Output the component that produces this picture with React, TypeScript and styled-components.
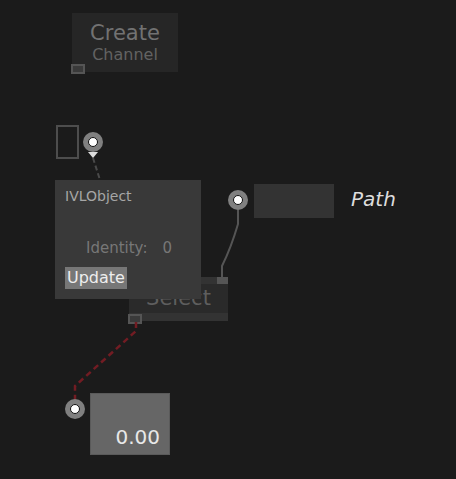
import React, { FC } from "react";
import styled, { createGlobalStyle } from "styled-components";

const GlobalStyle = createGlobalStyle`
  html, body {
    margin: 0;
    padding: 0;
    background: #1b1b1b;
  }
  body {
    font-family: "DejaVu Sans", "Liberation Sans", sans-serif;
  }
`;

const App: FC = () => {
  return (
    <StyledCanvas>
      <GlobalStyle />

      <StyledWires width={456} height={479}>
        <path d="M93 158 L100 180" stroke="#4a4a4a" strokeWidth={2} strokeDasharray="5 3" fill="none" />
        <path d="M238 210 L238 224 Q231 248 222 266 L222 278" stroke="#555" strokeWidth={2} fill="none" />
        <path d="M136 322 L136 331 L75 386 L75 400" stroke="#721c23" strokeWidth={2.5} strokeDasharray="6 4" fill="none" />
      </StyledWires>

      <StyledCreateNode>
        <StyledCreateTitle>Create</StyledCreateTitle>
        <StyledCreateSub>Channel</StyledCreateSub>
        <StyledSquarePort style={{ left: -1, bottom: -2 }} />
      </StyledCreateNode>

      <StyledEmptyFrame />

      <StyledRoundPort style={{ left: 83, top: 132 }} />
      <StyledArrow />

      <StyledSelectNode>
        <StyledStrip $top />
        <StyledSelectLabel>Select</StyledSelectLabel>
        <StyledStrip />
        <StyledTopPort />
        <StyledSquarePort style={{ left: -1, bottom: -3 }} />
      </StyledSelectNode>

      <StyledObjectNode>
        <StyledObjectTitle>IVLObject</StyledObjectTitle>
        <StyledObjectRow>
          <span>Identity:</span>
          <span>0</span>
        </StyledObjectRow>
        <StyledUpdateButton>Update</StyledUpdateButton>
      </StyledObjectNode>

      <StyledRoundPort style={{ left: 228, top: 190 }} />
      <StyledPathBox />
      <StyledPathLabel>Path</StyledPathLabel>

      <StyledRoundPort style={{ left: 65, top: 399 }} />
      <StyledValueNode>0.00</StyledValueNode>
    </StyledCanvas>
  );
};

const StyledCanvas = styled.div`
  position: relative;
  width: 456px;
  height: 479px;
  overflow: hidden;
  background: #1b1b1b;
`;

const StyledWires = styled.svg`
  position: absolute;
  left: 0;
  top: 0;
  z-index: 3;
  pointer-events: none;
`;

const StyledCreateNode = styled.div`
  position: absolute;
  left: 72px;
  top: 13px;
  width: 106px;
  height: 59px;
  background: #262626;
  display: flex;
  flex-direction: column;
  align-items: center;
  padding-top: 8px;
  box-sizing: border-box;
`;

const StyledCreateTitle = styled.div`
  font-size: 21px;
  line-height: 24px;
  color: #727272;
`;

const StyledCreateSub = styled.div`
  font-size: 16px;
  line-height: 19px;
  color: #626262;
`;

const StyledSquarePort = styled.div`
  position: absolute;
  width: 10px;
  height: 6px;
  border: 2px solid #555;
  background: #3a3a3a;
`;

const StyledTopPort = styled.div`
  position: absolute;
  right: 0;
  top: 0;
  width: 11px;
  height: 7px;
  background: #555;
`;

const StyledEmptyFrame = styled.div`
  position: absolute;
  left: 56px;
  top: 125px;
  width: 19px;
  height: 30px;
  border: 2px solid #4d4d4d;
`;

const StyledRoundPort = styled.div`
  position: absolute;
  width: 20px;
  height: 20px;
  border-radius: 50%;
  background: #808080;
  z-index: 4;
  &::after {
    content: "";
    position: absolute;
    left: 5px;
    top: 5px;
    width: 8px;
    height: 8px;
    border-radius: 50%;
    background: #fff;
    border: 1px solid #111;
  }
`;

const StyledArrow = styled.div`
  position: absolute;
  left: 88px;
  top: 152px;
  width: 0;
  height: 0;
  border-left: 5px solid transparent;
  border-right: 5px solid transparent;
  border-top: 6px solid #ddd;
  z-index: 4;
`;

const StyledSelectNode = styled.div`
  position: absolute;
  left: 129px;
  top: 277px;
  width: 99px;
  height: 44px;
  background: #2a2a2a;
  display: flex;
  flex-direction: column;
  z-index: 1;
`;

const StyledStrip = styled.div<{ $top?: boolean }>`
  height: ${(p) => (p.$top ? "7px" : "8px")};
  background: #333;
`;

const StyledSelectLabel = styled.div`
  flex: 1;
  font-size: 21px;
  line-height: 29px;
  color: #5e5e5e;
  text-align: center;
  overflow: hidden;
`;

const StyledObjectNode = styled.div`
  position: absolute;
  left: 55px;
  top: 180px;
  width: 146px;
  height: 119px;
  background: #393939;
  box-sizing: border-box;
  padding: 7px 10px 0 10px;
  display: flex;
  flex-direction: column;
  z-index: 2;
`;

const StyledObjectTitle = styled.div`
  font-size: 14px;
  line-height: 18px;
  color: #a6a6a6;
`;

const StyledObjectRow = styled.div`
  display: flex;
  gap: 15px;
  margin: 34px 0 0 21px;
  font-size: 15px;
  line-height: 18px;
  color: #777;
`;

const StyledUpdateButton = styled.div`
  align-self: flex-start;
  margin-top: 10px;
  padding: 0 2px;
  height: 22px;
  line-height: 22px;
  font-size: 16px;
  color: #eee;
  background: #777;
`;

const StyledPathBox = styled.div`
  position: absolute;
  left: 254px;
  top: 184px;
  width: 80px;
  height: 34px;
  background: #333;
`;

const StyledPathLabel = styled.div`
  position: absolute;
  left: 351px;
  top: 187px;
  font-size: 20px;
  font-style: italic;
  color: #ddd;
`;

const StyledValueNode = styled.div`
  position: absolute;
  left: 90px;
  top: 393px;
  width: 80px;
  height: 62px;
  box-sizing: border-box;
  background: #666;
  border: 1px solid #5a5a5a;
  display: flex;
  align-items: flex-end;
  justify-content: flex-end;
  padding: 0 9px 5px 0;
  font-size: 20px;
  color: #e8e8e8;
`;

export default App;
